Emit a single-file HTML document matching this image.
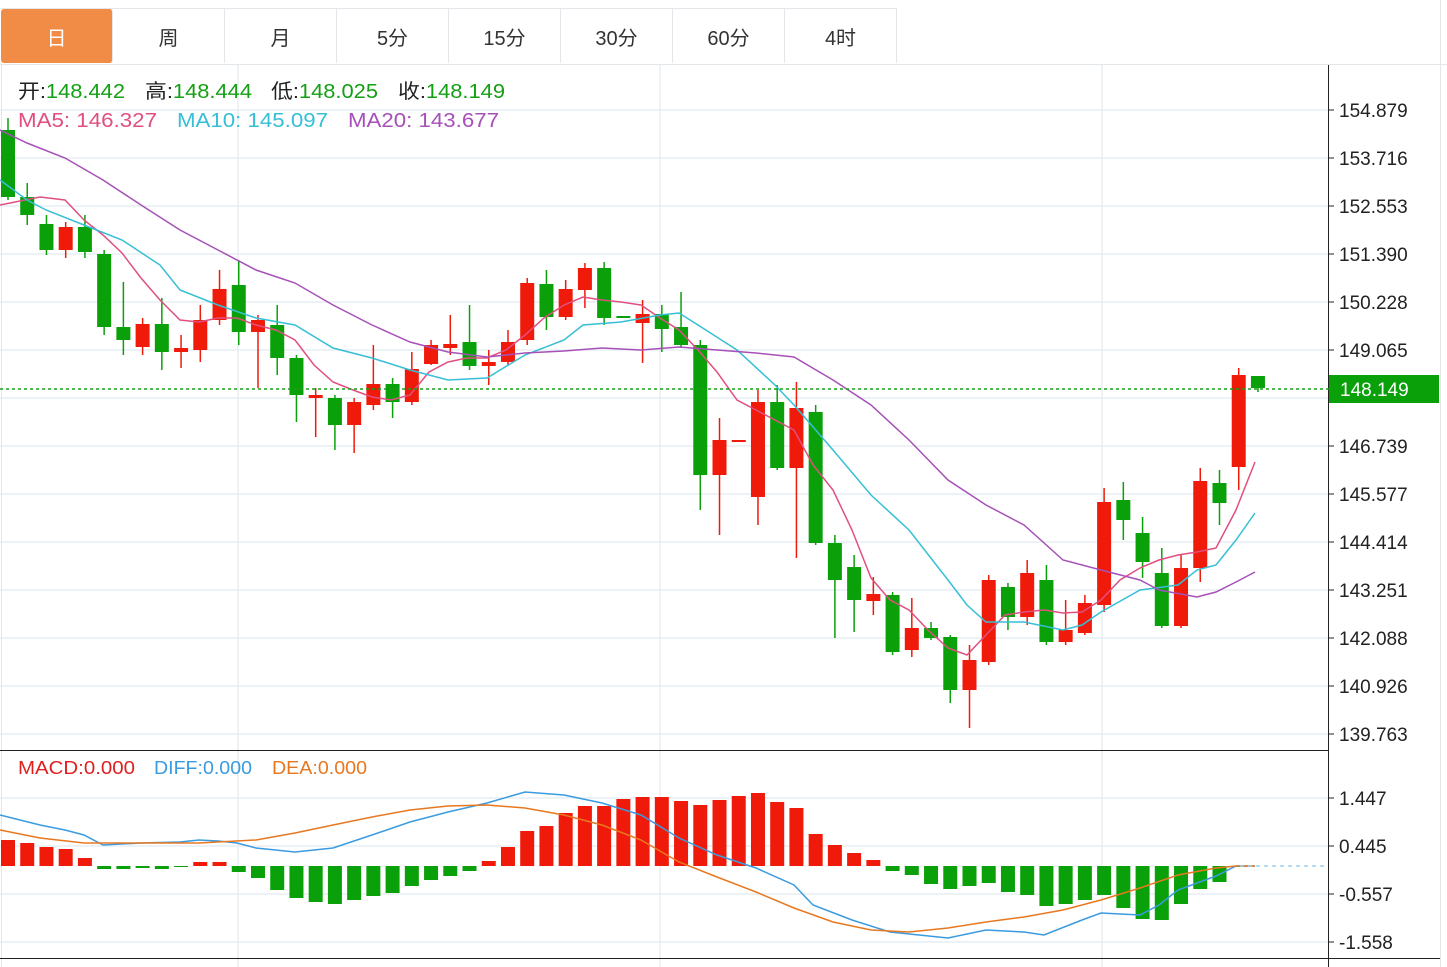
<!DOCTYPE html>
<html><head><meta charset="utf-8"><style>
body{margin:0;background:#fff;width:1447px;height:967px;overflow:hidden;font-family:"Liberation Sans","Noto Sans CJK SC",sans-serif}
.tabs{position:absolute;left:1px;top:8px;height:56px;display:flex;border-top:1px solid #e3e6ea}
.tab{width:111px;height:54px;border-right:1px solid #e3e6ea;display:flex;align-items:center;justify-content:center;font-size:20px;color:#333}
.tab.on{background:#f08c45;color:#fff;border-radius:3px}
svg{position:absolute;left:0;top:0}
</style></head><body>
<div class="tabs"><div class="tab on">日</div><div class="tab">周</div><div class="tab">月</div><div class="tab">5分</div><div class="tab">15分</div><div class="tab">30分</div><div class="tab">60分</div><div class="tab">4时</div></div>
<svg id="s" width="1447" height="967" xmlns="http://www.w3.org/2000/svg" font-family="Liberation Sans, Noto Sans CJK SC, sans-serif">
<line x1="0" y1="64.5" x2="1447" y2="64.5" stroke="#e3e6ea"/>
<line x1="1.5" y1="64" x2="1.5" y2="967" stroke="#e3e6ea"/>
<line x1="1440.5" y1="0" x2="1440.5" y2="967" stroke="#e3e6ea"/>
<g id="grid" stroke="#e6edf2" stroke-width="1.5"></g>
<line x1="0" y1="750.5" x2="1328" y2="750.5" stroke="#222"/>
<line x1="0" y1="958.5" x2="1440" y2="958.5" stroke="#222"/>
<line x1="1328.5" y1="65" x2="1328.5" y2="967" stroke="#222"/>
<g id="c"></g>
<line x1="0" y1="389" x2="1330" y2="389" stroke="#16a016" stroke-dasharray="3,3" stroke-width="1.5"/>
<line x1="1240" y1="866" x2="1328" y2="866" stroke="#9fd0ee" stroke-dasharray="4,4" stroke-width="1.5"/>
<rect x="1329" y="375" width="110" height="28" fill="#0aa00a"/>
<text x="1340" y="396" font-size="19" fill="#fff">148.149</text>
<g font-size="20" lengthAdjust="spacingAndGlyphs">
<text x="18" y="98" fill="#222" textLength="107" lengthAdjust="spacingAndGlyphs">开:<tspan fill="#14a014">148.442</tspan></text>
<text x="145" y="98" fill="#222" textLength="107" lengthAdjust="spacingAndGlyphs">高:<tspan fill="#14a014">148.444</tspan></text>
<text x="271" y="98" fill="#222" textLength="107" lengthAdjust="spacingAndGlyphs">低:<tspan fill="#14a014">148.025</tspan></text>
<text x="398" y="98" fill="#222" textLength="107" lengthAdjust="spacingAndGlyphs">收:<tspan fill="#14a014">148.149</tspan></text>
<text x="18" y="127" fill="#e04f80" textLength="139" lengthAdjust="spacingAndGlyphs">MA5: 146.327</text>
<text x="177" y="127" fill="#36bfd6" textLength="151" lengthAdjust="spacingAndGlyphs">MA10: 145.097</text>
<text x="348" y="127" fill="#a650b8" textLength="151" lengthAdjust="spacingAndGlyphs">MA20: 143.677</text>
</g>
<g font-size="18">
<text x="18" y="774" fill="#e02020" textLength="117" lengthAdjust="spacingAndGlyphs">MACD:0.000</text>
<text x="154" y="774" fill="#3a9be0" textLength="98" lengthAdjust="spacingAndGlyphs">DIFF:0.000</text>
<text x="272" y="774" fill="#e87820" textLength="95" lengthAdjust="spacingAndGlyphs">DEA:0.000</text>
</g>
</svg>
<script>
const NS="http://www.w3.org/2000/svg",s=document.getElementById('s'),g=document.getElementById('grid'),c=document.getElementById('c');
function el(p,t,a){const e=document.createElementNS(NS,t);for(const k in a)e.setAttribute(k,a[k]);p.appendChild(e);return e;}
const pl=[[110,'154.879'],[158,'153.716'],[206,'152.553'],[254,'151.390'],[302,'150.228'],[350,'149.065'],[446,'146.739'],[494,'145.577'],[542,'144.414'],[590,'143.251'],[638,'142.088'],[686,'140.926'],[734,'139.763'],[798,'1.447'],[846,'0.445'],[894,'-0.557'],[942,'-1.558']];
el(g,'line',{x1:0,y1:398,x2:1328,y2:398});
pl.forEach(([y,t])=>{el(g,'line',{x1:0,y1:y,x2:1328,y2:y});el(s,'line',{x1:1328,y1:y,x2:1334,y2:y,stroke:'#222'});const tx=el(s,'text',{x:1339,y:y+7,'font-size':19,fill:'#222'});tx.textContent=t;});
[238,660,1102].forEach(x=>el(g,'line',{x1:x,y1:65,x2:x,y2:967}));
const d=[[130,197,118,200,0],[197,215,183,225,0],[224,250,215,255,0],[227,250,222,258,1],[227,252,215,258,0],[254,327,250,335,0],[327,340,282,355,0],[324,347,318,355,1],[324,352,298,370,0],[348,352,335,368,1],[320,350,305,362,1],[289,320,270,325,1],[285,332,260,345,0],[320,332,315,388,1],[325,358,305,375,0],[358,395,355,422,0],[395,398,388,437,1],[398,425,395,450,0],[402,425,398,453,1],[384,405,345,410,1],[384,402,378,418,0],[369,402,352,405,1],[345,364,340,365,1],[344,348,315,355,1],[342,366,305,370,0],[362,366,350,385,1],[342,362,330,365,1],[283,340,278,345,1],[284,317,270,330,0],[289,317,280,320,1],[268,290,263,308,1],[268,318,262,325,0],[316,318,316,318,0],[314,323,300,363,1],[314,329,305,352,0],[327,345,292,348,0],[345,475,340,510,0],[440,475,418,535,1],[440,442,440,442,1],[402,497,390,525,1],[402,468,385,470,0],[408,468,382,558,1],[412,543,405,545,0],[543,580,535,638,0],[567,600,555,632,0],[594,601,577,615,1],[595,652,592,655,0],[628,650,598,657,1],[628,638,622,640,0],[637,690,635,703,0],[660,690,645,728,1],[580,662,575,665,1],[587,617,583,630,0],[573,617,560,625,1],[580,642,565,645,0],[630,642,600,645,1],[603,633,595,635,1],[502,605,488,612,1],[500,520,482,540,0],[533,562,517,578,0],[573,626,548,628,0],[568,626,555,628,1],[481,568,468,582,1],[483,503,470,525,0],[375,467,368,490,1],[376,388,376,392,0]];
const X=i=>8+i*19.23;
const mh=[840,843,847,849,858,869,869,868,869,866,862,862,872,878,890,898,902,904,900,896,893,886,880,876,871,861,847,831,826,813,806,806,799,797,797,801,805,800,796,793,802,808,834,845,853,860,871,875,884,889,886,883,892,895,906,904,900,895,908,919,920,904,889,882,866];
mh.forEach((y,i)=>{const x=X(i)-7;const up=y<866;el(c,'rect',{x:x,y:Math.min(y,866),width:14,height:Math.max(1,Math.abs(866-y)),fill:up?'#f01a0a':'#0aa00a'});});
d.forEach((v,i)=>{const x=X(i),col=v[4]?'#f01a0a':'#0aa00a';el(c,'line',{x1:x,y1:v[2],x2:x,y2:v[3],stroke:col,'stroke-width':1.5});el(c,'rect',{x:x-7,y:v[0],width:14,height:Math.max(2,v[1]-v[0]),fill:col});});
function line(p,col){el(c,'polyline',{points:p.map(a=>a.join(',')).join(' '),fill:'none',stroke:col,'stroke-width':1.5});}
line([[0,205],[40,197],[65,200],[84,220],[103,235],[122,253],[141,278],[160,300],[180,320],[199,322],[218,318],[237,318],[256,325],[276,330],[295,340],[314,365],[333,382],[353,390],[372,397],[391,400],[410,395],[429,372],[448,362],[467,358],[487,358],[506,350],[525,335],[544,318],[564,305],[583,297],[602,300],[621,302],[641,305],[660,318],[679,330],[698,350],[717,372],[737,400],[756,410],[775,420],[794,430],[813,465],[833,490],[852,530],[871,578],[890,600],[909,610],[928,630],[948,648],[967,655],[986,635],[1005,615],[1024,612],[1044,610],[1063,613],[1082,612],[1101,600],[1120,580],[1140,568],[1159,560],[1178,555],[1197,552],[1216,548],[1236,510],[1255,462]],'#e04f80');
line([[0,180],[27,200],[46,210],[84,225],[122,240],[160,265],[180,290],[218,305],[256,318],[295,325],[333,348],[372,358],[410,370],[448,380],[487,378],[525,355],[564,340],[583,325],[621,322],[660,315],[679,313],[698,325],[737,350],[775,385],[794,405],[833,450],[871,495],[909,530],[948,580],[967,605],[986,622],[1024,622],[1063,630],[1082,625],[1101,612],[1140,590],[1178,585],[1197,570],[1216,565],[1236,540],[1255,513]],'#36bfd6');
line([[0,130],[27,143],[65,158],[103,180],[141,205],[180,230],[218,250],[256,270],[295,283],[333,305],[372,325],[410,342],[448,352],[487,357],[525,353],[564,351],[602,348],[641,350],[679,347],[717,350],[756,353],[794,357],[833,380],[871,405],[909,440],[948,480],[986,505],[1024,525],[1063,560],[1101,570],[1140,580],[1159,590],[1197,597],[1216,592],[1236,582],[1255,572]],'#a650b8');
line([[0,815],[40,825],[65,830],[84,835],[103,845],[141,843],[180,842],[199,840],[218,841],[237,843],[256,848],[295,852],[333,848],[372,835],[410,822],[448,812],[487,803],[525,792],[564,795],[602,803],[641,815],[679,838],[717,855],[756,868],[794,885],[813,905],[852,920],[890,932],[948,938],[986,930],[1024,932],[1044,935],[1082,920],[1101,913],[1140,915],[1159,905],[1178,890],[1216,876],[1236,866],[1255,866]],'#3a9be0');
line([[0,830],[40,838],[84,843],[141,843],[199,843],[256,840],[295,833],[333,825],[372,817],[410,810],[448,806],[487,805],[525,808],[564,815],[602,825],[641,840],[679,862],[717,877],[756,892],[794,908],[833,922],[871,930],[909,932],[948,928],[986,922],[1024,917],[1063,910],[1101,900],[1140,888],[1178,875],[1216,868],[1236,866],[1255,866]],'#e87820');
</script>
</body></html>
